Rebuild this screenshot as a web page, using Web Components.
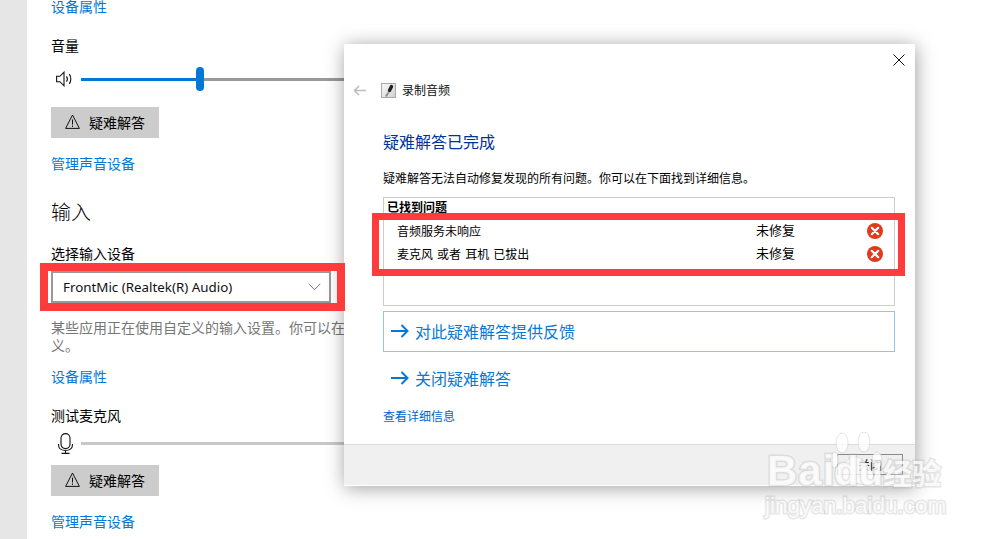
<!DOCTYPE html>
<html lang="zh">
<head>
<meta charset="utf-8">
<title>录制音频</title>
<style>
  html, body { margin: 0; height: 539px; overflow: hidden; background: #fff; }
  body { position: relative; font-family: "Noto Sans CJK SC", "Noto Sans", sans-serif; color: #000; }
</style>
</head>
<body>
<settings-panel>
  <settings-link style="margin-top:-3px">设备属性</settings-link>
  <field-label style="margin-top:19px">音量</field-label>
  <level-slider icon="speaker" value="119" style="margin-top:11px"></level-slider>
  <trouble-button style="margin-top:16px">疑难解答</trouble-button>
  <settings-link style="margin-top:16px">管理声音设备</settings-link>
  <section-title style="margin-top:24px">输入</section-title>
  <field-label style="margin-top:18px">选择输入设备</field-label>
  <device-select style="margin-top:7px">FrontMic (Realtek(R) Audio)</device-select>
  <field-note style="margin-top:15px">某些应用正在使用自定义的输入设置。你可以在<br>义。</field-note>
  <settings-link style="margin-top:13px">设备属性</settings-link>
  <field-label style="margin-top:19px">测试麦克风</field-label>
  <level-slider icon="mic" style="margin-top:5px"></level-slider>
  <trouble-button style="margin-top:10px">疑难解答</trouble-button>
  <settings-link style="margin-top:16px">管理声音设备</settings-link>
</settings-panel>

<troubleshoot-dialog>
  <issue-row>音频服务未响应</issue-row>
  <issue-row>麦克风 或者 耳机 已拔出</issue-row>
</troubleshoot-dialog>

<annotation-box style="left:40px;top:263px;width:305px;height:48px;--w:8px"></annotation-box>
<annotation-box style="left:372px;top:213px;width:533px;height:63px;--w:7px"></annotation-box>
<baidu-watermark></baidu-watermark>

<script>
class SettingsPanel extends HTMLElement {
  constructor() {
    super();
    this.attachShadow({ mode: 'open' });
    this.shadowRoot.innerHTML = `
      <style>
        :host { display: flex; height: 539px; overflow: hidden; }
        .strip { width: 27px; flex: none; background: #e6e6e6; }
        .content { flex: 1; padding-left: 24px; display: flex; flex-direction: column; align-items: flex-start; }
      </style>
      <div class="strip"></div>
      <div class="content"><slot></slot></div>
    `;
  }
}

class SettingsLink extends HTMLElement {
  constructor() {
    super();
    this.attachShadow({ mode: 'open' });
    this.shadowRoot.innerHTML = `
      <style>:host { display: block; font-size: 14px; line-height: 18px; padding-bottom: 2px; color: #0078d7; }</style>
      <slot></slot>
    `;
  }
}

class FieldLabel extends HTMLElement {
  constructor() {
    super();
    this.attachShadow({ mode: 'open' });
    this.shadowRoot.innerHTML = `
      <style>:host { display: block; font-size: 14px; line-height: 18px; padding-bottom: 2px; color: #000; }</style>
      <slot></slot>
    `;
  }
}

class FieldNote extends HTMLElement {
  constructor() {
    super();
    this.attachShadow({ mode: 'open' });
    this.shadowRoot.innerHTML = `
      <style>:host { display: block; font-size: 14px; line-height: 18px; color: #767676; white-space: nowrap; }</style>
      <slot></slot>
    `;
  }
}

class SectionTitle extends HTMLElement {
  constructor() {
    super();
    this.attachShadow({ mode: 'open' });
    this.shadowRoot.innerHTML = `
      <style>:host { display: block; font-size: 20px; font-weight: 300; line-height: 28px; color: #000; }</style>
      <slot></slot>
    `;
  }
}

class LevelSlider extends HTMLElement {
  connectedCallback() {
    const root = this.attachShadow({ mode: 'open' });
    const value = this.getAttribute('value');
    const kind = this.getAttribute('icon');
    const icons = {
      speaker: `<svg width="17" height="16" viewBox="0 0 17 16" fill="none" stroke="#111" stroke-width="1.1">
          <path d="M.6 5.300h3.300L8 1.200v13.600L3.900 10.700H.6z"/>
          <path d="M10.500 5.400c1 1.400 1 3.800 0 5.200M13.300 3.200c2 2.700 2 6.900 0 9.600"/>
        </svg>`,
      mic: `<svg width="15" height="21" viewBox="0 0 15 21" fill="none" stroke="#111" stroke-width="1.1">
          <rect x="3" y="0.600" width="9" height="15" rx="4.500"/>
          <path d="M.6 11v1.500c0 3 3 5 6.900 5s6.900-2 6.900-5V11M7.500 17.500v3M3.500 20.400h8"/>
        </svg>`
    };
    root.innerHTML = `
      <style>
        :host { display: flex; align-items: center; height: 24px; width: 294px; }
        .icon { width: 30px; flex: none; box-sizing: border-box; display: flex; padding-left: ${kind === 'mic' ? 7 : 5}px; }
        .track { flex: 1; height: 3px; background: ${value ? '#999' : '#c8c8c8'}; display: flex; align-items: center; }
        .fill { height: 3px; background: #0078d7; flex: none; }
        .thumb { width: 8px; height: 24px; border-radius: 4px; background: #0078d7; flex: none; }
      </style>
      <div class="icon">${icons[kind]}</div>
      <div class="track">
        ${value ? `<div class="fill" style="width:${value - 4}px"></div><div class="thumb"></div>` : ''}
      </div>
    `;
  }
}

class TroubleButton extends HTMLElement {
  constructor() {
    super();
    this.attachShadow({ mode: 'open' });
    this.shadowRoot.innerHTML = `
      <style>
        :host { display: flex; align-items: center; width: 108px; height: 31px; background: #cccccc; font-size: 14px; color: #000; box-sizing: border-box; padding: 0 0 2px 14px; gap: 9px; }
        svg { flex: none; }
      </style>
      <svg width="15" height="15" viewBox="0 0 15 15" fill="none" stroke="#111" stroke-width="1">
        <path d="M7.500 1 14.400 14.400H.6z"/>
        <path d="M7.500 5.500v5M7.500 11.500v1.400"/>
      </svg>
      <slot></slot>
    `;
  }
}

class DeviceSelect extends HTMLElement {
  constructor() {
    super();
    this.attachShadow({ mode: 'open' });
    this.shadowRoot.innerHTML = `
      <style>
        :host { display: flex; align-items: center; justify-content: space-between; box-sizing: border-box; width: 280px; height: 32px; border: 2px solid #999; padding: 0 8px 0 10px; font-family: "Noto Sans", sans-serif; font-size: 13.350px; color: #111; }
      </style>
      <span><slot></slot></span>
      <svg width="13" height="8" viewBox="0 0 13 8" fill="none" stroke="#777" stroke-width="1"><path d="M.7.8 6.500 6.600 12.300.8"/></svg>
    `;
  }
}

class IssueRow extends HTMLElement {
  constructor() {
    super();
    this.attachShadow({ mode: 'open' });
    this.shadowRoot.innerHTML = `
      <style>
        :host { display: flex; align-items: center; height: 23px; font-size: 12px; color: #000; padding-left: 13px; }
        .name { width: 359px; flex: none; white-space: pre; word-spacing: 1.400px; }
        .state { width: 111px; flex: none; font-size: 13px; position: relative; top: -1px; }
        svg { flex: none; }
      </style>
      <span class="name"><slot></slot></span>
      <span class="state">未修复</span>
      <svg width="16" height="16" viewBox="0 0 16 16">
        <circle cx="8" cy="8" r="8" fill="#e03a1c"/>
        <path d="M4.800 4.800 11.200 11.200M11.200 4.800 4.800 11.200" stroke="#fff" stroke-width="2.200" stroke-linecap="round"/>
      </svg>
    `;
  }
}

class CommandLink extends HTMLElement {
  constructor() {
    super();
    this.attachShadow({ mode: 'open' });
    this.shadowRoot.innerHTML = `
      <style>
        :host { display: flex; align-items: center; gap: 6px; box-sizing: border-box; height: 41px; padding: 0 0 2px 7px; border: 1px solid transparent; font-size: 16px; color: #0a78d2; }
        :host([boxed]) { border-color: #97c3e8; }
      </style>
      <svg width="18" height="14" viewBox="0 0 18 14" fill="none" stroke="#0a78d2" stroke-width="2"><path d="M0 7h16.500M10.500 1l6 6-6 6"/></svg>
      <slot></slot>
    `;
  }
}

class TroubleshootDialog extends HTMLElement {
  constructor() {
    super();
    this.attachShadow({ mode: 'open' });
    this.shadowRoot.innerHTML = `
      <style>
        :host { position: absolute; left: 344px; top: 44px; width: 571px; height: 442px; background: #fff; box-shadow: 1px 2px 18px rgba(0,0,0,.38); display: flex; flex-direction: column; font-size: 12px; color: #000; }
        .close { height: 28px; flex: none; display: flex; justify-content: flex-end; align-items: flex-start; padding: 10px 10px 0 0; box-sizing: border-box; }
        .nav { display: flex; align-items: center; height: 16px; margin-top: 10px; padding-left: 9px; }
        .nav .title { margin-left: 6px; line-height: 16px; color: #111; }
        .nav .pic { margin-left: 15px; }
        .body { flex: 1; padding: 0 20px 0 39px; display: flex; flex-direction: column; }
        h1 { font-weight: 400; font-size: 16px; line-height: 22px; margin: 32px 0 0; color: #003399; }
        p { margin: 17px 0 0; line-height: 18px; white-space: nowrap; }
        .found { box-sizing: border-box; height: 109px; margin-top: 10px; border: 1px solid #ccc; }
        .found b { display: block; font-weight: 700; font-size: 12px; line-height: 18px; padding-left: 3px; }
        .rows { margin-top: 3px; }
        .boxed { margin-top: 5px; width: 512px; }
        .plain { margin-top: 6px; }
        .more { color: #0066cc; line-height: 18px; margin-top: 8px; }
        .foot { flex: none; height: 42px; box-sizing: border-box; background: #f0f0f0; border-top: 1px solid #dcdcdc; border-bottom: 1px solid #fff; display: flex; justify-content: flex-end; align-items: flex-start; padding: 9px 12px 0 0; }
        .btn { box-sizing: border-box; width: 66px; height: 21px; border: 1px solid #8a8a8a; display: flex; align-items: center; justify-content: center; font-size: 12px; color: #000; background: #efefef; }
      </style>
      <div class="close">
        <svg width="12" height="12" viewBox="0 0 12 12" stroke="#111" stroke-width="1"><path d="M.5.5l11 11M11.500.5l-11 11"/></svg>
      </div>
      <div class="nav">
        <svg width="13" height="11" viewBox="0 0 13 11" fill="none" stroke="#bdbdbd" stroke-width="1.600"><path d="M13 5.500H1.500M6 1 1.500 5.500 6 10"/></svg>
        <svg class="pic" width="15" height="15" viewBox="0 0 15 15">
          <defs><linearGradient id="g" x1="0" y1="0" x2="1" y2="1"><stop offset="0" stop-color="#fafafa"/><stop offset="1" stop-color="#d0d0d0"/></linearGradient></defs>
          <rect x=".5" y=".5" width="14" height="14" fill="url(#g)" stroke="#a8a8a8"/>
          <path d="M8.500 7.500 10.500 3.500" stroke="#222" stroke-width="3.400" stroke-linecap="round"/>
          <path d="M7.500 9.500 4.800 13.500" stroke="#8a8a8a" stroke-width="1.800"/>
        </svg>
        <span class="title">录制音频</span>
      </div>
      <div class="body">
        <h1>疑难解答已完成</h1>
        <p>疑难解答无法自动修复发现的所有问题。你可以在下面找到详细信息。</p>
        <div class="found">
          <b>已找到问题</b>
          <div class="rows"><slot></slot></div>
        </div>
        <command-link boxed class="boxed">对此疑难解答提供反馈</command-link>
        <command-link class="plain">关闭疑难解答</command-link>
        <div class="more">查看详细信息</div>
      </div>
      <div class="foot"><div class="btn">关闭</div></div>
    `;
  }
}

class AnnotationBox extends HTMLElement {
  constructor() {
    super();
    this.attachShadow({ mode: 'open' });
    this.shadowRoot.innerHTML = `
      <style>
        :host { position: absolute; box-sizing: border-box; border: var(--w) solid #ff3b3b; }
      </style>
    `;
  }
}

class BaiduWatermark extends HTMLElement {
  constructor() {
    super();
    this.attachShadow({ mode: 'open' });
    this.shadowRoot.innerHTML = `
      <style>
        :host { position: absolute; left: 760px; top: 428px; width: 195px; height: 96px; pointer-events: none; font-family: "Liberation Sans", "Noto Sans CJK SC", sans-serif; }
        span { position: absolute; white-space: nowrap; color: rgba(255,255,255,.78); paint-order: stroke fill; -webkit-text-stroke: 3px rgba(170,170,170,.28); }
        .bai { left: 7px; top: 23px; font-size: 42px; line-height: 40px; font-weight: 700; letter-spacing: 1px; }
        .du { left: 74px; top: 23px; font-size: 40px; line-height: 40px; font-weight: 700; }
        .jy { left: 123px; top: 29px; font-size: 29px; line-height: 30px; font-weight: 700; font-family: "Noto Sans CJK SC", sans-serif; }
        .url { left: 5px; top: 64px; font-size: 22.500px; line-height: 28px; }
        svg { position: absolute; left: 70px; top: 4px; }
      </style>
      <svg width="54" height="56" viewBox="0 0 54 56" fill="rgba(255,255,255,.78)" stroke="rgba(170,170,170,.3)">
        <ellipse cx="12" cy="11" rx="6" ry="10"/>
        <ellipse cx="34" cy="10" rx="6" ry="10"/>
        <ellipse cx="4.500" cy="28" rx="4" ry="8"/>
        <ellipse cx="47" cy="28" rx="5" ry="8"/>
        <path d="M25 25c-8 0-11 8-15 13-4 6-2 15 6 15 4 0 6-2 9-2s6 2 11 2c8 0 10-9 5-15-4-5-8-13-16-13z"/>
      </svg>
      <span class="bai">Bai</span>
      <span class="du">du</span>
      <span class="jy">经验</span>
      <span class="url">jingyan.baidu.com</span>
    `;
  }
}

customElements.define('settings-panel', SettingsPanel);
customElements.define('settings-link', SettingsLink);
customElements.define('field-label', FieldLabel);
customElements.define('field-note', FieldNote);
customElements.define('section-title', SectionTitle);
customElements.define('level-slider', LevelSlider);
customElements.define('trouble-button', TroubleButton);
customElements.define('device-select', DeviceSelect);
customElements.define('issue-row', IssueRow);
customElements.define('command-link', CommandLink);
customElements.define('troubleshoot-dialog', TroubleshootDialog);
customElements.define('annotation-box', AnnotationBox);
customElements.define('baidu-watermark', BaiduWatermark);
</script>
</body>
</html>
